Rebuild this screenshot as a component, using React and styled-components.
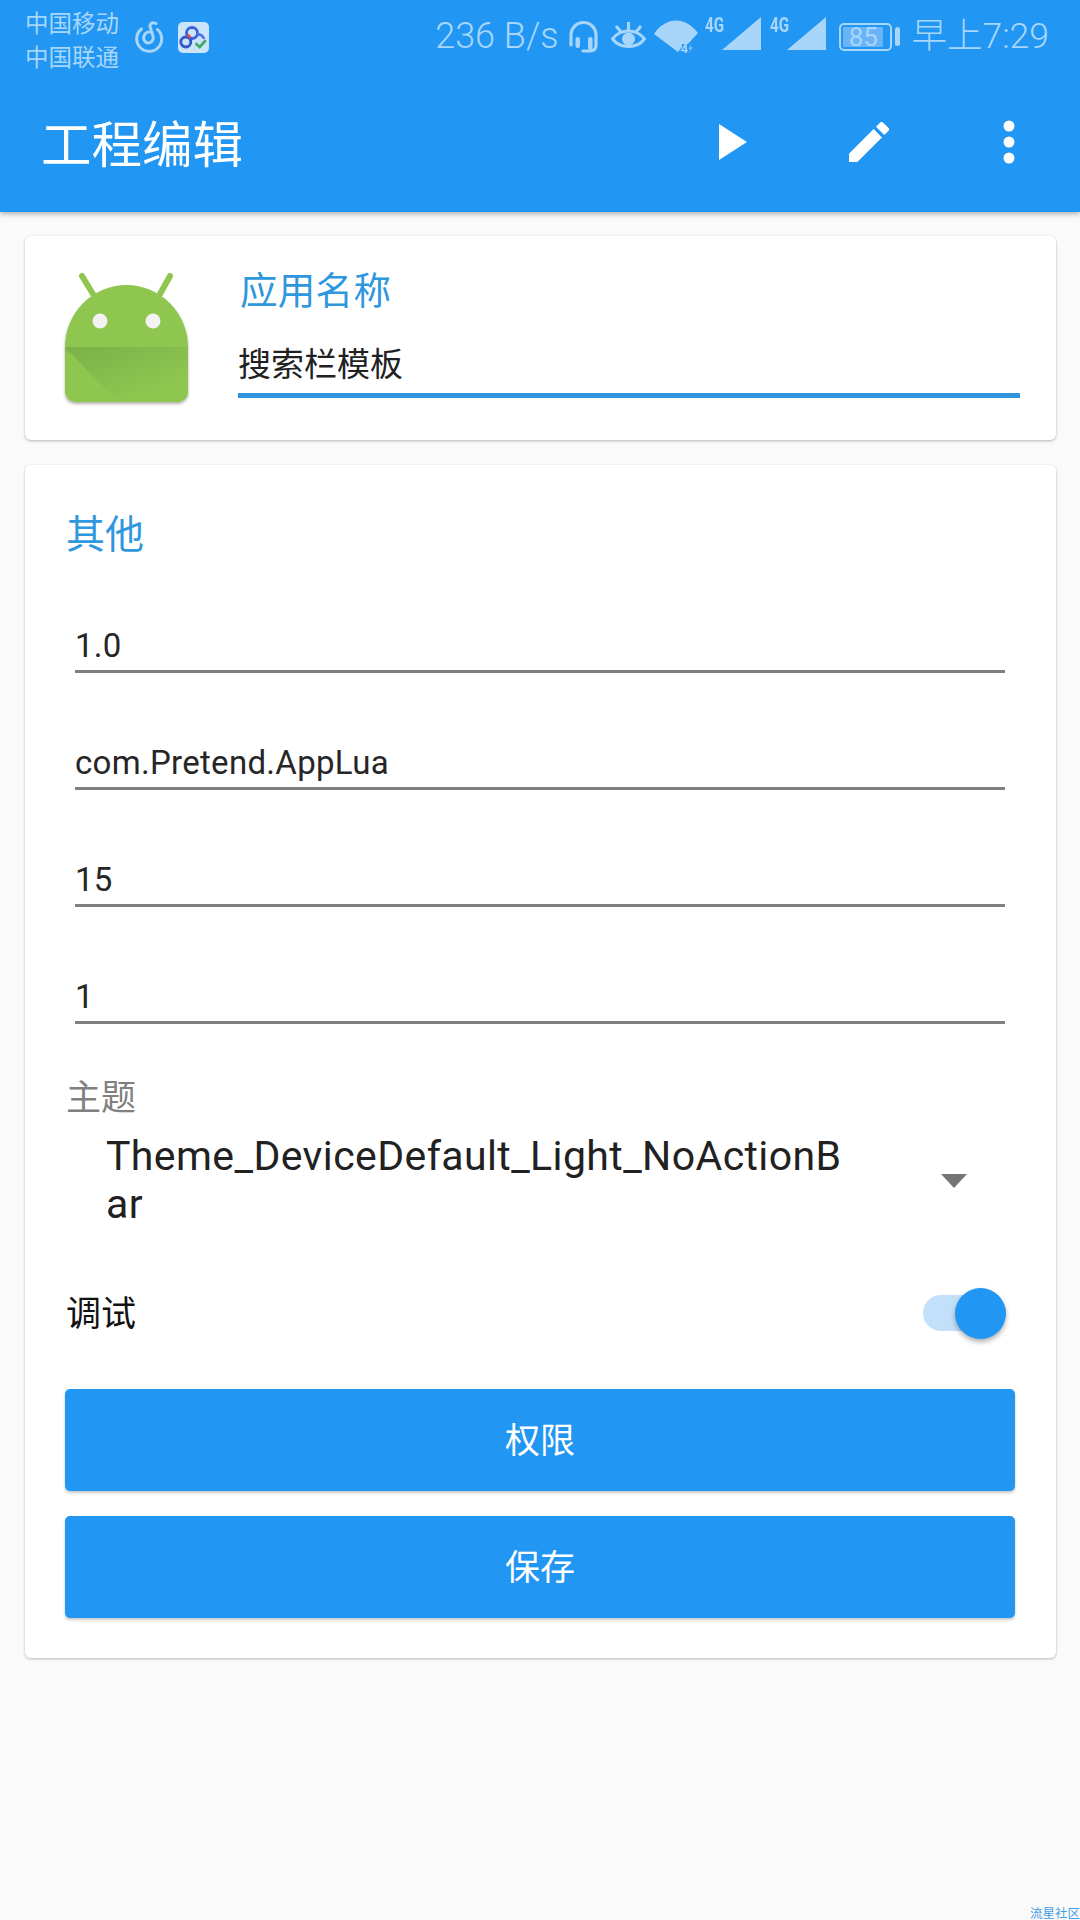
import React from "react";
import styled, { createGlobalStyle } from "styled-components";

const Global = createGlobalStyle`
  html, body { margin: 0; padding: 0; background: #fafafa; }
  * { box-sizing: border-box; }
  #root { width: 1080px; height: 1920px; overflow: hidden; }
`;

const FONT = `Roboto, "Noto Sans CJK SC", sans-serif`;
const CJK = `"Noto Sans CJK SC", sans-serif`;
const DIM = "#a8d6fb";

const Page = styled.div`
  position: relative;
  width: 1080px;
  height: 1920px;
  background: #fafafa;
  font-family: ${FONT};
  overflow: hidden;
`;
const Header = styled.header`
  height: 212px;
  background: #2196f3;
  box-shadow: 0 2px 5px rgba(0, 0, 0, 0.3);
  display: flex;
  flex-direction: column;
`;
const StatusBar = styled.div`
  height: 76px;
  display: flex;
  align-items: flex-start;
  padding: 5px 31px 0 25px;
  color: ${DIM};
`;
const Carriers = styled.div`
  font: 23.500px/34px ${CJK};
  width: 109px;
`;
const StatusLeft = styled.div`
  display: flex;
  align-items: center;
  gap: 14px;
  margin-top: 16px;
`;
const StatusRight = styled.div`
  margin-left: auto;
  display: flex;
  align-items: center;
  height: 54px;
  margin-top: 4px;
`;
const Speed = styled.span`
  font: 300 36px/40px Roboto, sans-serif;
  margin-right: 10px;
  white-space: nowrap;
`;
const SmallNet = styled.span`
  position: absolute;
  top: 7px;
  left: 0;
  font: 700 19.500px/20px Roboto, sans-serif;
  transform: scaleX(0.78);
  transform-origin: left;
`;
const NetGroup = styled.span`
  position: relative;
  display: block;
  width: 56px;
  height: 41px;
  margin-right: ${(p) => p.$gap}px;
  align-self: flex-start;
`;
const SignalShape = styled.svg`
  position: absolute;
  right: 0;
  bottom: 0;
`;
const Battery = styled.span`
  position: relative;
  width: 53px;
  height: 28px;
  margin-top: 2px;
  border: 2px solid ${DIM};
  border-radius: 5px;
  padding: 2px;
  margin-right: 19px;
  display: flex;
`;
const BatteryFill = styled.span`
  width: 88%;
  background: #68b4f7;
  font: 400 26px/20px Roboto, sans-serif;
  color: ${DIM};
  text-align: center;
  border-radius: 1px;
`;
const BatteryNub = styled.span`
  position: absolute;
  right: -10px;
  top: 2px;
  width: 5px;
  height: 19px;
  border-radius: 2.500px;
  background: ${DIM};
`;
const Clock = styled.span`
  font: 300 35.500px/40px Roboto, ${CJK};
  white-space: nowrap;
`;
const AppBar = styled.div`
  flex: 1;
  display: flex;
  align-items: center;
  padding: 0 65px 0 41px;
  color: #fff;
`;
const Title = styled.h1`
  margin: 0 auto 6px 0;
  font: 400 50.500px/60px ${CJK};
  color: #fff;
`;
const ActionIcon = styled.svg`
  display: block;
  margin-left: ${(p) => p.$ml}px;
  margin-bottom: 4px;
`;
const Content = styled.main`
  padding: 24px 24px 0 25px;
  display: flex;
  flex-direction: column;
  gap: 25px;
`;
const Card = styled.section`
  background: #fff;
  border-radius: 6px;
  box-shadow: 0 1px 3px rgba(0, 0, 0, 0.28);
`;
const AppCard = styled(Card)`
  height: 204px;
  display: flex;
  padding: 35px 36px 0 37px;
`;
const AppInfo = styled.div`
  flex: 1;
  margin-left: 46px;
`;
const BlueLabel = styled.div`
  font: 400 37.500px/44px ${CJK};
  color: #2f97dd;
  letter-spacing: 0.300px;
  margin-left: 2px;
  margin-top: -5px;
`;
const NameInput = styled.div`
  margin-top: 28px;
  height: 60px;
  font: 400 33px/48px ${CJK};
  color: #212121;
  border-bottom: 5px solid #2f94dc;
`;
const FormCard = styled(Card)`
  padding: 43px 41px 40px 40px;
`;
const Heading = styled.h2`
  margin: 0 0 0 1px;
  font: 400 39px/46px ${CJK};
  color: #2f97dd;
`;
const Fields = styled.div`
  margin-top: 69px;
  padding: 0 10px;
  display: flex;
  flex-direction: column;
  gap: 67px;
`;
const Field = styled.div`
  height: 50px;
  font: 400 33px/46px ${FONT};
  letter-spacing: 0.300px;
  color: #262626;
  border-bottom: 3px solid #7f7f7f;
`;
const ThemeLabel = styled.div`
  margin: 49px 0 0 1px;
  font: 400 35px/44px ${CJK};
  color: #808080;
`;
const ThemeRow = styled.div`
  display: flex;
  align-items: center;
  margin-top: 14px;
  height: 98px;
`;
const ThemeValue = styled.div`
  width: 745px;
  margin-left: 41px;
  font: 400 41px/48px ${FONT};
  letter-spacing: 0.400px;
  color: #212121;
  word-break: break-all;
`;
const Caret = styled.div`
  margin-left: 90px;
  margin-top: 2px;
  width: 0;
  height: 0;
  border-left: 13px solid transparent;
  border-right: 13px solid transparent;
  border-top: 14px solid #757575;
`;
const DebugRow = styled.div`
  display: flex;
  align-items: center;
  justify-content: space-between;
  margin-top: 58px;
  height: 52px;
  padding: 0 9px 0 1px;
`;
const DebugLabel = styled.div`
  font: 400 35px/44px ${CJK};
  color: #111;
  margin-bottom: 4px;
`;
const Toggle = styled.div`
  position: relative;
  width: 83px;
  height: 36px;
  border-radius: 18px;
  background: #c3e0fb;
`;
const Thumb = styled.div`
  position: absolute;
  right: 0;
  top: -7px;
  width: 51px;
  height: 51px;
  border-radius: 50%;
  background: #2196f3;
  box-shadow: 0 3px 5px rgba(0, 0, 0, 0.3);
`;
const Buttons = styled.div`
  margin-top: 50px;
  display: flex;
  flex-direction: column;
  gap: 25px;
`;
const Button = styled.button`
  height: 102px;
  border: none;
  border-radius: 5px;
  background: #2196f3;
  color: #fff;
  padding: 0 0 4px;
  font: 400 35px/44px ${CJK};
  box-shadow: 0 2px 3px rgba(0, 0, 0, 0.22);
`;
const Watermark = styled.div`
  position: absolute;
  right: 0;
  bottom: 0;
  font: 400 12.500px/14px ${CJK};
  color: #3f9ee8;
  white-space: nowrap;
`;

const NeteaseIcon = () => (
  <svg width="30" height="32" viewBox="0 0 30 32" fill="none" stroke={DIM} strokeWidth="3" strokeLinecap="round">
    <path d="M7.500 8A12.500 12.500 0 1 0 23.500 8.500" />
    <path d="M22 2.500C18 .5 15 3 16.500 7L19 15C20 19 17 22.500 14 22C10.500 21.500 9 18 10 15C11 12 14 10.500 17 11" />
  </svg>
);

const CloudIcon = () => (
  <svg width="31" height="31" viewBox="0 0 31 31" fill="none">
    <rect width="31" height="31" rx="5" fill="#cbe4fb" />
    <circle cx="14" cy="11" r="5.500" stroke="#3c63d6" strokeWidth="2.800" />
    <circle cx="7.800" cy="20" r="5" stroke="#2f57d0" strokeWidth="2.800" />
    <path d="M19 12c3 0 6.500 2 7 5" stroke="#4f76e4" strokeWidth="2.800" />
    <path d="M9.500 12.500l3 3" stroke="#e0524a" strokeWidth="2.600" />
    <path d="M17.500 21.300l4.200 3.800 6-6.800" stroke="#3fae62" strokeWidth="2.800" />
  </svg>
);

const HeadsetIcon = () => (
  <svg width="31" height="33" viewBox="0 0 31 33" fill="none" style={{ marginRight: 12 }}>
    <path d="M3 25V15A12.500 12.500 0 0 1 28 15V25C28 29 26 31 22 31H15" stroke={DIM} strokeWidth="3.200" strokeLinecap="round" />
    <rect x="7.500" y="17" width="4.500" height="11" rx="2.200" fill={DIM} />
    <rect x="20" y="17" width="4.500" height="13" rx="2.200" fill={DIM} />
  </svg>
);

const EyeIcon = () => (
  <svg width="35" height="27" viewBox="0 0 35 27" fill="none" stroke={DIM} style={{ marginRight: 8, marginBottom: 3 }}>
    <path d="M1.500 18C6 12 11 10 17.500 10S29 12 33.500 18C29 24 24 25.500 17.500 25.500S6 24 1.500 18z" strokeWidth="3" />
    <circle cx="17.500" cy="18" r="6.500" fill={DIM} stroke="none" />
    <path d="M17.500 1V9M5 5l5 6M30 5l-5 6" strokeWidth="3" />
  </svg>
);

const WifiIcon = () => (
  <svg width="45" height="33" viewBox="0 0 45 33" style={{ marginRight: 6 }}>
    <path d="M0 14C6 5 14 .5 22 .5S38 5 44 13L34 24H28V27L24 32z" fill={DIM} />
    <text x="26.500" y="32.500" fontSize="13" fontWeight="700" fill={DIM} fontFamily="Roboto, sans-serif">4</text>
    <path d="M37 24l-3 5h2l-1 4 4-6h-2z" fill="#6fb8f7" />
  </svg>
);

const Net = ({ gap }) => (
  <NetGroup $gap={gap}>
    <SmallNet>4G</SmallNet>
    <SignalShape width="39" height="33" viewBox="0 0 39 33">
      <path d="M39 0v33H0z" fill={DIM} />
    </SignalShape>
  </NetGroup>
);

const AndroidIcon = () => (
  <svg width="130" height="140" viewBox="0 0 130 140" style={{ flex: "none" }}>
    <defs>
      <linearGradient id="fold" x1="0.05" y1="0" x2="0.7" y2="0.8">
        <stop offset="0" stopColor="#7bb149" />
        <stop offset="1" stopColor="#8fc650" />
      </linearGradient>
      <linearGradient id="strip" x1="0" y1="0" x2="0" y2="1">
        <stop offset="0" stopColor="#7fb44a" />
        <stop offset="1" stopColor="#8fc650" />
      </linearGradient>
      <filter id="soft" x="-10%" y="-10%" width="120%" height="120%">
        <feDropShadow dx="0" dy="2" stdDeviation="1.500" floodColor="#000" floodOpacity="0.3" />
      </filter>
    </defs>
    <path d="M20 5L31 23M108 5L98 23" stroke="#8fc650" strokeWidth="6" strokeLinecap="round" />
    <g filter="url(#soft)">
      <path d="M3 76A61.500 62 0 0 1 126 76V121a10 10 0 0 1-10 10H13a10 10 0 0 1-10-10z" fill="#8fc650" />
    </g>
    <path d="M3 76H126V84H3z" fill="url(#strip)" />
    <path d="M3 76H126V121a10 10 0 0 1-10 10H56z" fill="url(#fold)" />
    <circle cx="38" cy="50" r="7.500" fill="#f2f2f2" />
    <circle cx="91" cy="50" r="7.500" fill="#f2f2f2" />
  </svg>
);

export default function App() {
  return (
    <Page>
      <Global />
      <Header>
        <StatusBar>
          <Carriers>
            <div>中国移动</div>
            <div>中国联通</div>
          </Carriers>
          <StatusLeft>
            <NeteaseIcon />
            <CloudIcon />
          </StatusLeft>
          <StatusRight>
            <Speed>236 B/s</Speed>
            <HeadsetIcon />
            <EyeIcon />
            <WifiIcon />
            <Net gap={9} />
            <Net gap={13} />
            <Battery>
              <BatteryFill>85</BatteryFill>
              <BatteryNub />
            </Battery>
            <Clock>早上7:29</Clock>
          </StatusRight>
        </StatusBar>
        <AppBar>
          <Title>工程编辑</Title>
          <ActionIcon $ml={0} width="30" height="38" viewBox="0 0 30 38">
            <path d="M1 1l28 18L1 37z" fill="#fff" />
          </ActionIcon>
          <ActionIcon $ml={101} width="40" height="40" viewBox="3 3 18 18">
            <path
              fill="#fff"
              d="M3 17.250V21h3.750L17.810 9.940l-3.750-3.750L3 17.250zM20.710 7.040a1 1 0 0 0 0-1.410l-2.340-2.340a1 1 0 0 0-1.410 0l-1.830 1.830 3.750 3.750 1.830-1.830z"
            />
          </ActionIcon>
          <ActionIcon $ml={114} width="12" height="44" viewBox="0 0 12 44">
            <circle cx="6" cy="6" r="5.500" fill="#fff" />
            <circle cx="6" cy="22" r="5.500" fill="#fff" />
            <circle cx="6" cy="38" r="5.500" fill="#fff" />
          </ActionIcon>
        </AppBar>
      </Header>
      <Content>
        <AppCard>
          <AndroidIcon />
          <AppInfo>
            <BlueLabel>应用名称</BlueLabel>
            <NameInput>搜索栏模板</NameInput>
          </AppInfo>
        </AppCard>
        <FormCard>
          <Heading>其他</Heading>
          <Fields>
            <Field>1.0</Field>
            <Field>com.Pretend.AppLua</Field>
            <Field>15</Field>
            <Field>1</Field>
          </Fields>
          <ThemeLabel>主题</ThemeLabel>
          <ThemeRow>
            <ThemeValue>Theme_DeviceDefault_Light_NoActionBar</ThemeValue>
            <Caret />
          </ThemeRow>
          <DebugRow>
            <DebugLabel>调试</DebugLabel>
            <Toggle>
              <Thumb />
            </Toggle>
          </DebugRow>
          <Buttons>
            <Button>权限</Button>
            <Button>保存</Button>
          </Buttons>
        </FormCard>
      </Content>
      <Watermark>流星社区</Watermark>
    </Page>
  );
}
